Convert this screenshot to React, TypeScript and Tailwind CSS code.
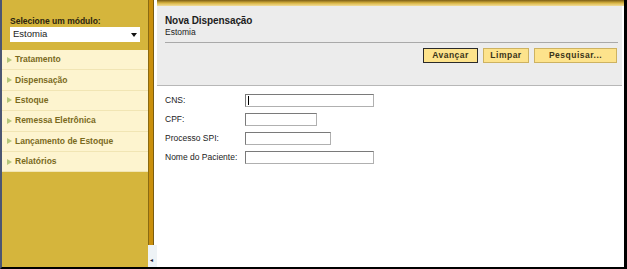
import React from "react";

const menu = [
  "Tratamento",
  "Dispensação",
  "Estoque",
  "Remessa Eletrônica",
  "Lançamento de Estoque",
  "Relatórios",
];

const fields = [
  { label: "CNS:", width: "w-[129px]", caret: true },
  { label: "CPF:", width: "w-[72px]" },
  { label: "Processo SPI:", width: "w-[86px]" },
  { label: "Nome do Paciente:", width: "w-[129px]" },
];

function Arrow() {
  return (
    <svg width="5" height="6" viewBox="0 0 5 6" className="mr-[3px] shrink-0">
      <path d="M0 0 L5 3 L0 6 Z" fill="#b5c77a" />
    </svg>
  );
}

export default function App() {
  return (
    <div
      className="w-[627px] h-[269px] flex bg-white border-l-2 border-l-[#4b5673] border-r-[3px] border-r-black border-b-2 border-b-black overflow-hidden"
      style={{ fontFamily: '"Liberation Sans", Arial, sans-serif' }}
    >
      {/* menu lateral */}
      <div className="w-[146px] shrink-0 bg-[#d5b53c] flex flex-col">
        <div className="pt-[16px] px-[8px]">
          <div className="text-[8.5px] font-bold text-[#2b2410] leading-[10px]">Selecione um módulo:</div>
          <div className="mt-[1px] h-[15px] bg-white flex items-center justify-between px-[3px]">
            <span className="text-[9.5px] text-[#222]">Estomia</span>
            <svg width="6" height="4" viewBox="0 0 6 4">
              <path d="M0 0 L6 0 L3 4 Z" fill="#111" />
            </svg>
          </div>
        </div>
        <div className="mt-[8px] bg-[#fdf4cf]">
          {menu.map((m) => (
            <div
              key={m}
              className="h-[20.4px] flex items-center pl-[5px] border-b border-b-[#f1e5b4] text-[8.5px] font-bold text-[#7a6a1d]"
            >
              <Arrow />
              {m}
            </div>
          ))}
        </div>
      </div>

      {/* separador */}
      <div className="w-[9px] shrink-0 flex flex-col bg-white">
        <div className="flex-1 flex">
          <div className="w-[1px] bg-[#8a6a12]" />
          <div className="w-[4px] bg-[#c98f0c]" />
          <div className="w-[1px] bg-[#7a5c10]" />
          <div className="w-[3px] bg-white" />
        </div>
        <div className="h-[22px] flex items-end pb-[4px] pl-[2px] bg-[#eef3f6]">
          <span className="text-[6px] leading-none text-[#223]">◂</span>
        </div>
      </div>

      {/* conteúdo */}
      <div className="flex-1 flex flex-col">
        <div className="h-[6px] bg-gradient-to-b from-[#7c5e14] via-[#d9b440] to-[#f2de98]" />
        <div className="flex-1 flex">
          <div className="flex-1 flex flex-col">
            <div className="bg-[#ececec] h-[80px] border-b border-b-[#b7b7b7] pl-[8px] pr-[4px] pt-[9px]">
              <div className="text-[10px] font-bold text-[#1d1d1d] leading-[12px] tracking-[-0.1px]">Nova Dispensação</div>
              <div className="text-[8.5px] text-[#222] leading-[11px]">Estomia</div>
              <div className="mt-[4px] h-[1px] bg-[#a9a9a9]" />
              <div className="mt-[5px] flex justify-end gap-[5px] pr-[1px]">
                <button className="h-[15px] w-[55px] bg-[#fde38c] border border-[#2a2a2a] text-[8.5px] font-bold tracking-[0.5px] text-[#3a3418]">
                  Avançar
                </button>
                <button className="h-[15px] w-[46px] bg-[#fde38c] border border-[#cdb261] text-[8.5px] font-bold tracking-[0.5px] text-[#3a3418]">
                  Limpar
                </button>
                <button className="h-[15px] w-[83px] bg-[#fde38c] border border-[#cdb261] text-[8.5px] font-bold tracking-[0.5px] text-[#3a3418]">
                  Pesquisar...
                </button>
              </div>
            </div>
            <div className="pl-[8px] pt-[8px] flex flex-col gap-[6px]">
              {fields.map((f) => (
                <div key={f.label} className="flex items-center h-[13px]">
                  <span className="w-[80px] text-[8.5px] text-[#222]">{f.label}</span>
                  <div
                    className={`${f.width} h-[13px] bg-white border border-[#b0b0b0] border-t-[#7a7a7a] border-l-[#7a7a7a] flex items-center pl-[2px]`}
                  >
                    {f.caret && <div className="w-[1px] h-[9px] bg-black" />}
                  </div>
                </div>
              ))}
            </div>
          </div>
          <div className="w-[2px] bg-white" />
        </div>
      </div>
    </div>
  );
}
